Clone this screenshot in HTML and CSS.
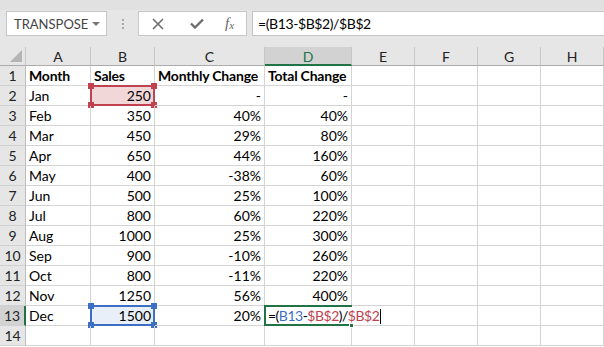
FILE: index.html
```html
<!DOCTYPE html>
<html lang="en">

<head>
     <meta charset="UTF-8">
     <title>Excel - Total Change</title>
     <link rel="stylesheet" href="styles.css">
</head>

<body>
     <header class="toolbar">
          <div class="namebox">TRANSPOSE<span class="caret"></span></div>
          <div class="grip"><i></i><i></i><i></i></div>
          <div class="fxbox">
               <svg class="icon" width="12" height="12" viewBox="0 0 12 12"><path d="M1 1L11 11M11 1L1 11" stroke="#6d6d6d" stroke-width="1.6" fill="none"/></svg>
               <svg class="icon" width="14" height="11" viewBox="0 0 14 11"><path d="M1 5.5L5 9.5L13 1.5" stroke="#6d6d6d" stroke-width="2.4" fill="none"/></svg>
               <span class="fx">f<sub>x</sub></span>
          </div>
          <div class="formula">=(B13-$B$2)/$B$2</div>
     </header>

     <main class="sheet">
          <div class="corner"></div>
          <div class="colhead">A</div>
          <div class="colhead">B</div>
          <div class="colhead">C</div>
          <div class="colhead active">D</div>
          <div class="colhead">E</div>
          <div class="colhead">F</div>
          <div class="colhead">G</div>
          <div class="colhead">H</div>

          <div class="rowhead">1</div>
          <div class="cell bold">Month</div>
          <div class="cell bold">Sales</div>
          <div class="cell bold">Monthly Change</div>
          <div class="cell bold">Total Change</div>
          <div class="cell"></div><div class="cell"></div><div class="cell"></div><div class="cell"></div>

          <div class="rowhead">2</div>
          <div class="cell">Jan</div>
          <div class="cell num ref-red">250</div>
          <div class="cell num">-</div>
          <div class="cell num">-</div>
          <div class="cell"></div><div class="cell"></div><div class="cell"></div><div class="cell"></div>

          <div class="rowhead">3</div>
          <div class="cell">Feb</div>
          <div class="cell num">350</div>
          <div class="cell num">40%</div>
          <div class="cell num">40%</div>
          <div class="cell"></div><div class="cell"></div><div class="cell"></div><div class="cell"></div>

          <div class="rowhead">4</div>
          <div class="cell">Mar</div>
          <div class="cell num">450</div>
          <div class="cell num">29%</div>
          <div class="cell num">80%</div>
          <div class="cell"></div><div class="cell"></div><div class="cell"></div><div class="cell"></div>

          <div class="rowhead">5</div>
          <div class="cell">Apr</div>
          <div class="cell num">650</div>
          <div class="cell num">44%</div>
          <div class="cell num">160%</div>
          <div class="cell"></div><div class="cell"></div><div class="cell"></div><div class="cell"></div>

          <div class="rowhead">6</div>
          <div class="cell">May</div>
          <div class="cell num">400</div>
          <div class="cell num">-38%</div>
          <div class="cell num">60%</div>
          <div class="cell"></div><div class="cell"></div><div class="cell"></div><div class="cell"></div>

          <div class="rowhead">7</div>
          <div class="cell">Jun</div>
          <div class="cell num">500</div>
          <div class="cell num">25%</div>
          <div class="cell num">100%</div>
          <div class="cell"></div><div class="cell"></div><div class="cell"></div><div class="cell"></div>

          <div class="rowhead">8</div>
          <div class="cell">Jul</div>
          <div class="cell num">800</div>
          <div class="cell num">60%</div>
          <div class="cell num">220%</div>
          <div class="cell"></div><div class="cell"></div><div class="cell"></div><div class="cell"></div>

          <div class="rowhead">9</div>
          <div class="cell">Aug</div>
          <div class="cell num">1000</div>
          <div class="cell num">25%</div>
          <div class="cell num">300%</div>
          <div class="cell"></div><div class="cell"></div><div class="cell"></div><div class="cell"></div>

          <div class="rowhead">10</div>
          <div class="cell">Sep</div>
          <div class="cell num">900</div>
          <div class="cell num">-10%</div>
          <div class="cell num">260%</div>
          <div class="cell"></div><div class="cell"></div><div class="cell"></div><div class="cell"></div>

          <div class="rowhead">11</div>
          <div class="cell">Oct</div>
          <div class="cell num">800</div>
          <div class="cell num">-11%</div>
          <div class="cell num">220%</div>
          <div class="cell"></div><div class="cell"></div><div class="cell"></div><div class="cell"></div>

          <div class="rowhead">12</div>
          <div class="cell">Nov</div>
          <div class="cell num">1250</div>
          <div class="cell num">56%</div>
          <div class="cell num">400%</div>
          <div class="cell"></div><div class="cell"></div><div class="cell"></div><div class="cell"></div>

          <div class="rowhead active">13</div>
          <div class="cell">Dec</div>
          <div class="cell num ref-blue">1500</div>
          <div class="cell num">20%</div>
          <div class="cell editing"><span class="edit-text">=(<span class="c-blue">B13</span>-<span class="c-red">$B$2</span>)/<span class="c-red">$B$2</span><span class="cursor"></span></span></div>
          <div class="cell"></div><div class="cell"></div><div class="cell"></div><div class="cell"></div>

          <div class="rowhead">14</div>
          <div class="cell"></div><div class="cell"></div><div class="cell"></div><div class="cell"></div>
          <div class="cell"></div><div class="cell"></div><div class="cell"></div><div class="cell"></div>
     </main>
</body>
</html>
```

FILE: styles.css
```css
html {
     box-sizing: border-box;
     font-family: Lato, "Open Sans", sans-serif;
     font-size: 14px;
}

*,
*:before,
*:after {
     box-sizing: inherit;
}

body {
     margin: 0;
     width: 604px;
     height: 347px;
     overflow: hidden;
     background: #fff;
     color: #000;
}

/* formula bar */
.toolbar {
     height: 47px;
     background-color: #e6e6e6;
     border-top: 10px solid #e1e1e1;
     padding-top: 1px;
     display: flex;
     align-items: flex-start;
}

.namebox {
     margin-left: 6px;
     width: 101px;
     height: 25px;
     background: #fff;
     border: 1px solid #c6c6c6;
     display: flex;
     align-items: center;
     justify-content: space-between;
     padding: 0 6px 0 7px;
     font-size: 13px;
     color: #444;
}

.caret {
     width: 0;
     height: 0;
     border-left: 4px solid transparent;
     border-right: 4px solid transparent;
     border-top: 4px solid #777;
}

.grip {
     width: 31px;
     height: 25px;
     display: flex;
     flex-direction: column;
     align-items: center;
     justify-content: center;
     gap: 2px;
}

.grip i {
     width: 2px;
     height: 2px;
     background: #a8a8a8;
}

.fxbox {
     width: 109px;
     height: 25px;
     background: #fff;
     border: 1px solid #c6c6c6;
     display: flex;
     align-items: center;
     padding-left: 13px;
}

.fxbox .icon:first-child {
     margin-right: 26px;
}

.fxbox .icon:nth-child(2) {
     margin-right: 21px;
}

.fx {
     font-family: "Liberation Serif", serif;
     font-style: italic;
     font-size: 15px;
     color: #666;
}

.fx sub {
     font-size: 11px;
     vertical-align: -1px;
}

.formula {
     margin-left: 5px;
     flex-grow: 1;
     height: 25px;
     background: #fff;
     border: 1px solid #c6c6c6;
     border-right: 0;
     padding-left: 5px;
     line-height: 23px;
     font-size: 14px;
     letter-spacing: -0.4px;
}

/* sheet */
.sheet {
     display: grid;
     grid-template-columns: 26px 65px 64px 110px 87px 63px 63px 63px 63px;
     grid-template-rows: 19px repeat(14, 20px);
}

.corner {
     background: #e6e6e6;
     border-right: 1px solid #c6c6c6;
     border-bottom: 1px solid #ababab;
     position: relative;
}

.corner:after {
     content: "";
     position: absolute;
     right: 3px;
     bottom: 3px;
     border-left: 12px solid transparent;
     border-bottom: 12px solid #b4b4b4;
}

.colhead {
     background: #e6e6e6;
     border-right: 1px solid #c6c6c6;
     border-bottom: 1px solid #ababab;
     text-align: center;
     line-height: 19px;
     font-size: 14px;
     color: #222;
}

.colhead.active {
     background: #d2d2d2;
     border-bottom: 2px solid #217346;
     color: #217346;
}

.rowhead {
     background: #e6e6e6;
     border-right: 1px solid #bdbdbd;
     border-bottom: 1px solid #d0d0d0;
     text-align: center;
     line-height: 20px;
     font-size: 14px;
     color: #222;
}

.rowhead.active {
     background: #d2d2d2;
     border-right: 2px solid #217346;
}

.cell {
     border-right: 1px solid #d4d4d4;
     border-bottom: 1px solid #d4d4d4;
     padding: 0 3px;
     line-height: 20px;
     white-space: nowrap;
     position: relative;
}

.bold {
     font-weight: bold;
     letter-spacing: -0.2px;
}

.num {
     text-align: right;
}

.ref-red {
     background: #f2d7d9;
}

.ref-blue {
     background: #e8eff9;
}

.ref-red:before,
.ref-blue:before {
     content: "";
     position: absolute;
     left: -1px;
     top: -1px;
     right: -1px;
     bottom: -1px;
     border: 2px solid #c0414f;
}

.ref-blue:before {
     border-color: #3c6fc4;
}

.ref-red:after,
.ref-blue:after {
     content: "";
     position: absolute;
     left: -3px;
     top: -3px;
     right: -3px;
     bottom: -3px;
     --h: #c0414f;
     background:
          linear-gradient(var(--h), var(--h)) left top / 6px 6px no-repeat,
          linear-gradient(var(--h), var(--h)) right top / 6px 6px no-repeat,
          linear-gradient(var(--h), var(--h)) left bottom / 6px 6px no-repeat,
          linear-gradient(var(--h), var(--h)) right bottom / 6px 6px no-repeat;
}

.ref-blue:after {
     --h: #3c6fc4;
}

.editing {
     overflow: visible;
     z-index: 2;
}

.editing:before {
     content: "";
     position: absolute;
     left: -1px;
     top: -1px;
     right: -1px;
     bottom: -1px;
     border: 2px solid #217346;
     border-right: 0;
}

.editing:after {
     content: "";
     position: absolute;
     right: -3px;
     bottom: -3px;
     width: 5px;
     height: 5px;
     background: #217346;
     border: 1px solid #fff;
}

.edit-text {
     position: relative;
     background: #fff;
     padding-right: 2px;
     z-index: 1;
     letter-spacing: -0.5px;
}

.c-blue {
     color: #3c6fc4;
}

.c-red {
     color: #c0414f;
}

.cursor {
     display: inline-block;
     width: 1px;
     height: 15px;
     background: #000;
     vertical-align: -3px;
     margin-left: 1px;
}
```
